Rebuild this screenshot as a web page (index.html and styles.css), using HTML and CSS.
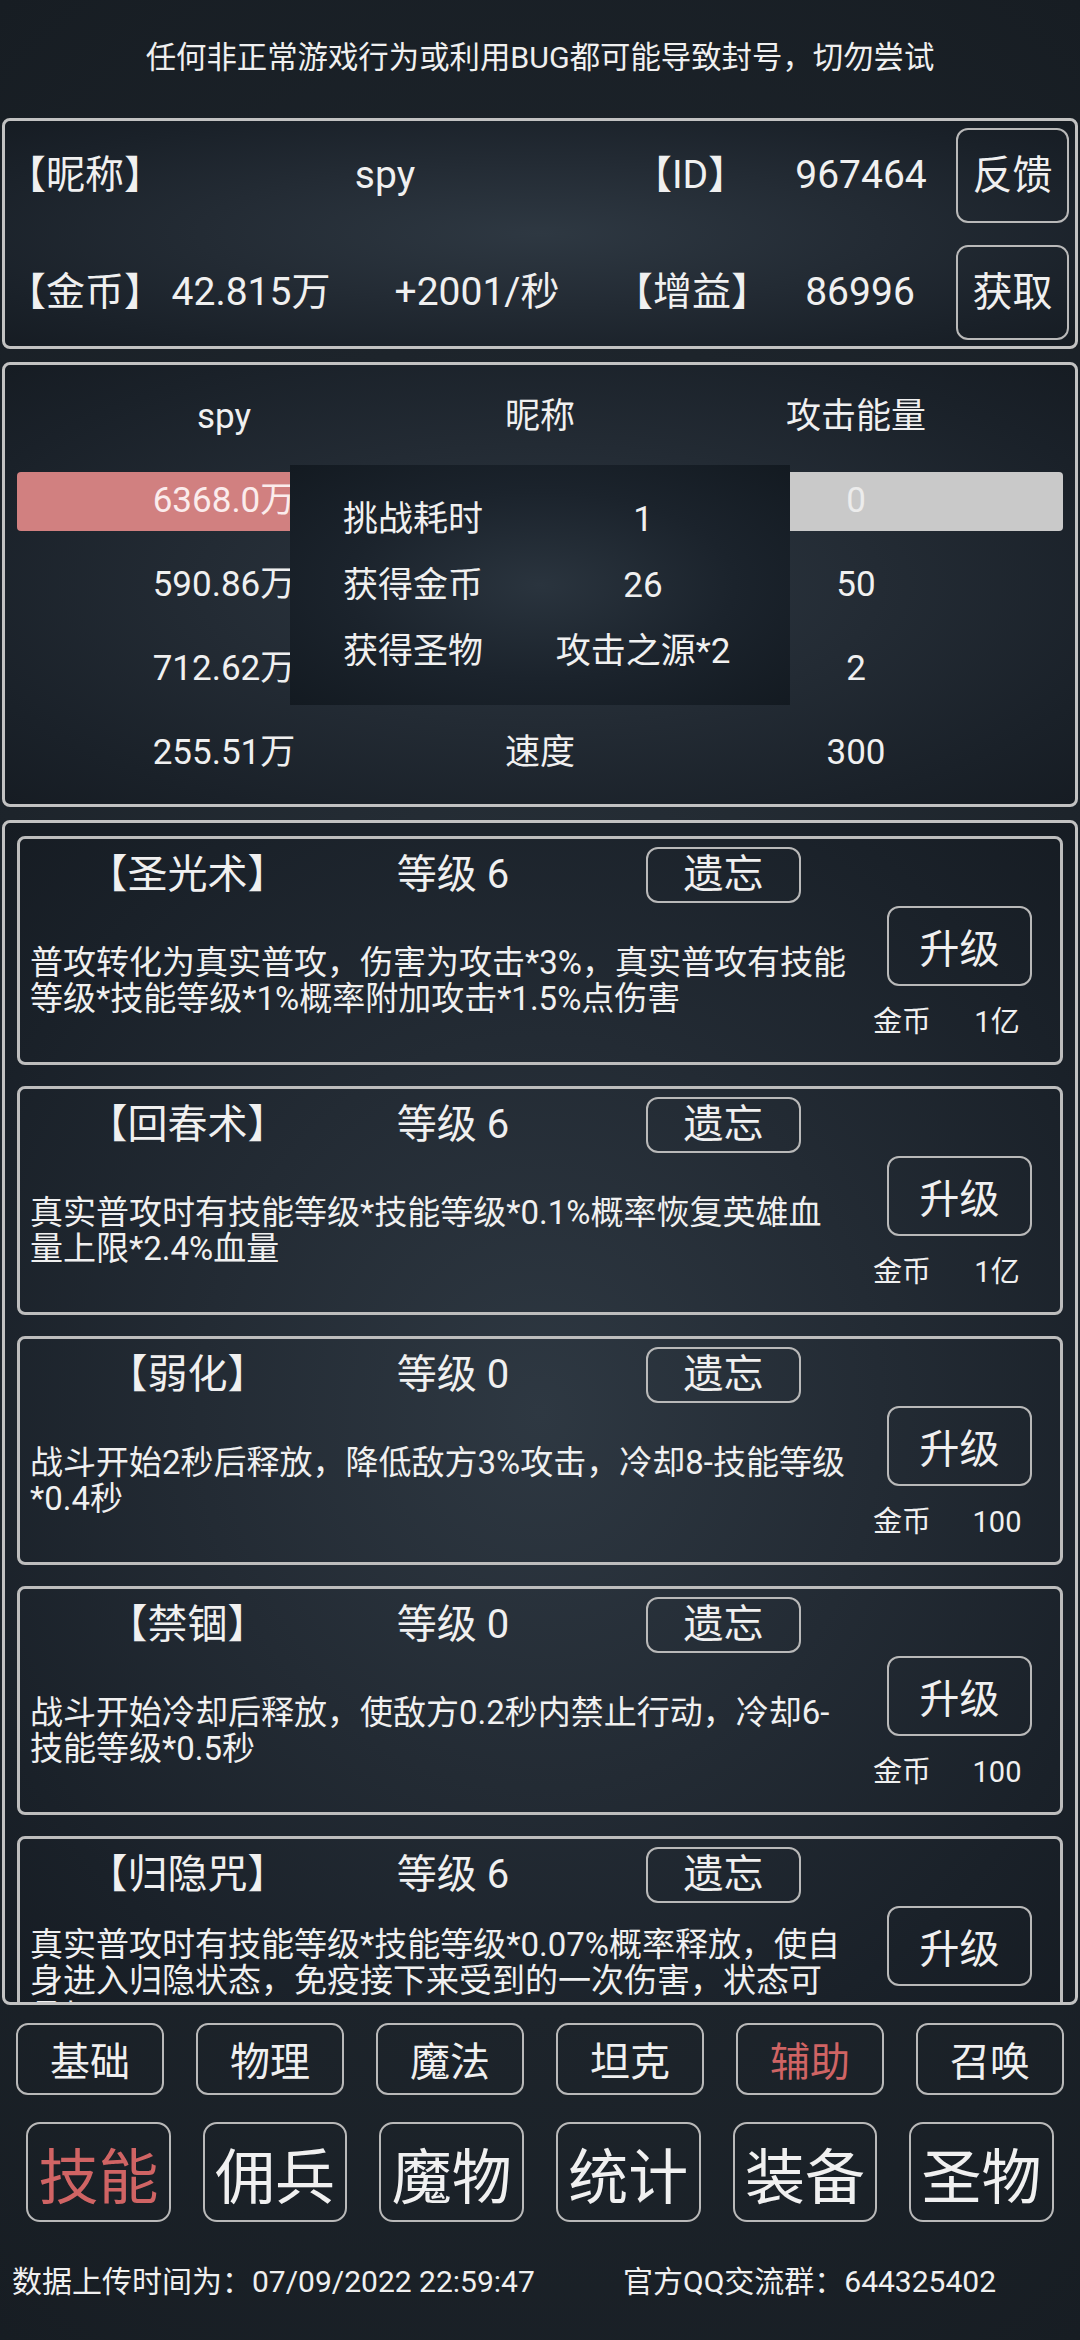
FILE: index.html
```html
<!DOCTYPE html>
<html lang="zh-CN">
<head>
<meta charset="utf-8">
<title>技能</title>
<link rel="stylesheet" href="styles.css">
</head>
<body>
<div class="notice">任何非正常游戏行为或利用BUG都可能导致封号，切勿尝试</div>

<section class="panel info">
  <div class="info-row r1">
    <span class="lbl">【昵称】</span>
    <span>spy</span>
    <span>【ID】</span>
    <span>967464</span>
    <button class="btn side">反馈</button>
  </div>
  <div class="info-row r2">
    <span class="lbl">【金币】</span>
    <span>42.815万</span>
    <span>+2001/秒</span>
    <span>【增益】</span>
    <span>86996</span>
    <button class="btn side">获取</button>
  </div>
</section>

<section class="panel battle">
  <div class="brow">
    <span>spy</span><span>昵称</span><span>攻击能量</span>
  </div>
  <div class="brow">
    <div class="bar"><span class="hp">6368.0万</span><span></span><span class="en">0</span></div>
  </div>
  <div class="brow">
    <span>590.86万</span><span></span><span>50</span>
  </div>
  <div class="brow">
    <span>712.62万</span><span></span><span>2</span>
  </div>
  <div class="brow">
    <span>255.51万</span><span>速度</span><span>300</span>
  </div>
  <div class="result">
    <span>挑战耗时</span><span>1</span>
    <span>获得金币</span><span>26</span>
    <span>获得圣物</span><span>攻击之源*2</span>
  </div>
</section>

<section class="panel skills">
  <div class="skill">
    <div class="sk-head"><span>【圣光术】</span><span>等级 6</span><button class="btn forget">遗忘</button></div>
    <p class="sk-desc">普攻转化为真实普攻，伤害为攻击*3%，真实普攻有技能等级*技能等级*1%概率附加攻击*1.5%点伤害</p>
    <div class="sk-side"><button class="btn up">升级</button><div class="cost"><span>金币</span><span>1亿</span></div></div>
  </div>
  <div class="skill">
    <div class="sk-head"><span>【回春术】</span><span>等级 6</span><button class="btn forget">遗忘</button></div>
    <p class="sk-desc">真实普攻时有技能等级*技能等级*0.1%概率恢复英雄血量上限*2.4%血量</p>
    <div class="sk-side"><button class="btn up">升级</button><div class="cost"><span>金币</span><span>1亿</span></div></div>
  </div>
  <div class="skill">
    <div class="sk-head"><span>【弱化】</span><span>等级 0</span><button class="btn forget">遗忘</button></div>
    <p class="sk-desc">战斗开始2秒后释放，降低敌方3%攻击，冷却8-技能等级*0.4秒</p>
    <div class="sk-side"><button class="btn up">升级</button><div class="cost"><span>金币</span><span>100</span></div></div>
  </div>
  <div class="skill">
    <div class="sk-head"><span>【禁锢】</span><span>等级 0</span><button class="btn forget">遗忘</button></div>
    <p class="sk-desc">战斗开始冷却后释放，使敌方0.2秒内禁止行动，冷却6-技能等级*0.5秒</p>
    <div class="sk-side"><button class="btn up">升级</button><div class="cost"><span>金币</span><span>100</span></div></div>
  </div>
  <div class="skill">
    <div class="sk-head"><span>【归隐咒】</span><span>等级 6</span><button class="btn forget">遗忘</button></div>
    <p class="sk-desc">真实普攻时有技能等级*技能等级*0.07%概率释放，使自身进入归隐状态，免疫接下来受到的一次伤害，状态可叠加</p>
    <div class="sk-side"><button class="btn up">升级</button><div class="cost"><span>金币</span><span>1亿</span></div></div>
  </div>
</section>

<nav class="tabs">
  <button class="btn tab">基础</button>
  <button class="btn tab">物理</button>
  <button class="btn tab">魔法</button>
  <button class="btn tab">坦克</button>
  <button class="btn tab active">辅助</button>
  <button class="btn tab">召唤</button>
</nav>

<nav class="mainnav">
  <button class="btn nb active">技能</button>
  <button class="btn nb">佣兵</button>
  <button class="btn nb">魔物</button>
  <button class="btn nb">统计</button>
  <button class="btn nb">装备</button>
  <button class="btn nb">圣物</button>
</nav>

<footer class="foot">
  <span>数据上传时间为：07/09/2022 22:59:47</span>
  <span>官方QQ交流群：644325402</span>
</footer>
</body>
</html>
```

FILE: styles.css
```css
* {
  box-sizing: border-box;
  margin: 0;
  padding: 0;
}

html, body {
  width: 1080px;
  height: 2340px;
}

body {
  overflow: hidden;
  color: #f0f0f0;
  font-family: Roboto, "Noto Sans CJK SC", sans-serif;
  background: #1a2128 radial-gradient(ellipse 90% 60% at 50% 50%, #2a333c 0%, #1d242b 60%, #171d23 100%);
}

.btn {
  font: inherit;
  color: inherit;
  background: transparent;
  border: 2px solid #b9b9b9;
  border-radius: 12px;
  display: flex;
  align-items: center;
  justify-content: center;
  white-space: nowrap;
}

.active {
  color: #d06464;
}

.notice {
  height: 118px;
  padding-bottom: 9px;
  display: flex;
  align-items: center;
  justify-content: center;
  font-size: 30.4px;
}

.panel {
  position: relative;
  margin: 0 2px;
  border: 3px solid #c2c2c2;
  border-radius: 8px;
  background: radial-gradient(ellipse at 50% 50%, #2e3842 0%, #232b34 45%, #1a2129 80%, #161c23 100%);
}

/* ---- player info ---- */
.info {
  height: 231px;
  padding: 7px 6px 6px 2px;
  display: flex;
  flex-direction: column;
  gap: 22px;
  font-size: 39px;
}

.info-row {
  height: 95px;
  display: grid;
  align-items: center;
  line-height: 1.2;
}

.r1 {
  grid-template-columns: 155px 446px 164px 178px 1fr;
}

.r2 {
  grid-template-columns: 155px 178px 274px 154px 184px 1fr;
}

.info-row span {
  text-align: center;
  white-space: nowrap;
}

.info-row .lbl {
  text-align: left;
}

.side {
  justify-self: end;
  width: 113px;
  height: 95px;
  font-size: 40px;
}

/* ---- battle ---- */
.battle {
  height: 445px;
  margin-top: 13px;
  padding: 10px 12px 9px;
  font-size: 35px;
}

.brow {
  height: 84px;
  display: grid;
  grid-template-columns: 414px 218px 414px;
  align-items: center;
  text-align: center;
  line-height: 1.2;
}

.bar {
  grid-column: 1 / -1;
  height: 59px;
  display: grid;
  grid-template-columns: 414px 218px 414px;
  align-items: center;
  border-radius: 4px;
  background: linear-gradient(90deg, #d18080 0 50%, #c9c9c9 50% 100%);
}

.bar .hp {
  color: #fbecec;
}

.bar .en {
  color: #ececec;
}

.result {
  position: absolute;
  left: 285px;
  top: 100px;
  width: 500px;
  height: 240px;
  padding: 22px 0 20px 40px;
  display: grid;
  grid-template-columns: 166px 294px;
  grid-auto-rows: 66px;
  align-items: center;
  text-align: center;
  line-height: 1.2;
  white-space: nowrap;
  background: radial-gradient(ellipse at 50% 50%, #2a343e 0%, #1b232c 55%, #131a21 100%);
}

/* ---- skills ---- */
.skills {
  height: 1185px;
  margin-top: 13px;
  padding: 13px 12px;
  overflow: hidden;
}

.skill {
  height: 229px;
  margin-bottom: 21px;
  border: 3px solid #bdbdbd;
  border-radius: 8px;
  display: grid;
  grid-template-columns: 838px 1fr;
  grid-template-rows: 72px 1fr;
}

.sk-head {
  grid-column: 1;
  grid-row: 1;
  display: grid;
  grid-template-columns: 335px 196px auto;
  align-items: center;
  font-size: 40px;
  line-height: 1.2;
  text-align: center;
  white-space: nowrap;
}

.forget {
  margin-left: 95px;
  width: 155px;
  height: 56px;
}

.sk-desc {
  grid-column: 1;
  grid-row: 2;
  align-self: center;
  width: 831px;
  padding-left: 10px;
  margin-bottom: 11px;
  font-size: 33px;
  line-height: 36px;
}

.sk-side {
  grid-column: 2;
  grid-row: 1 / 3;
  padding-top: 67px;
}

.up {
  margin-left: 29px;
  width: 145px;
  height: 80px;
  font-size: 40px;
}

.cost {
  margin-top: 18px;
  display: grid;
  grid-template-columns: 88px 88px;
  column-gap: 7px;
  font-size: 29px;
  line-height: 36px;
  text-align: center;
  white-space: nowrap;
}

/* ---- bottom navigation ---- */
.tabs {
  margin-top: 18px;
  padding: 0 16px;
  display: flex;
  gap: 32px;
}

.tab {
  width: 148px;
  height: 72px;
  font-size: 40px;
}

.mainnav {
  margin-top: 27px;
  padding: 0 26px;
  display: flex;
  gap: 31.8px;
}

.nb {
  width: 145px;
  height: 100px;
  border-radius: 14px;
  font-size: 60px;
}

.foot {
  margin-top: 40px;
  padding-left: 12px;
  display: grid;
  grid-template-columns: 611px 1fr;
  font-size: 30px;
  line-height: 40px;
  white-space: nowrap;
}
```
